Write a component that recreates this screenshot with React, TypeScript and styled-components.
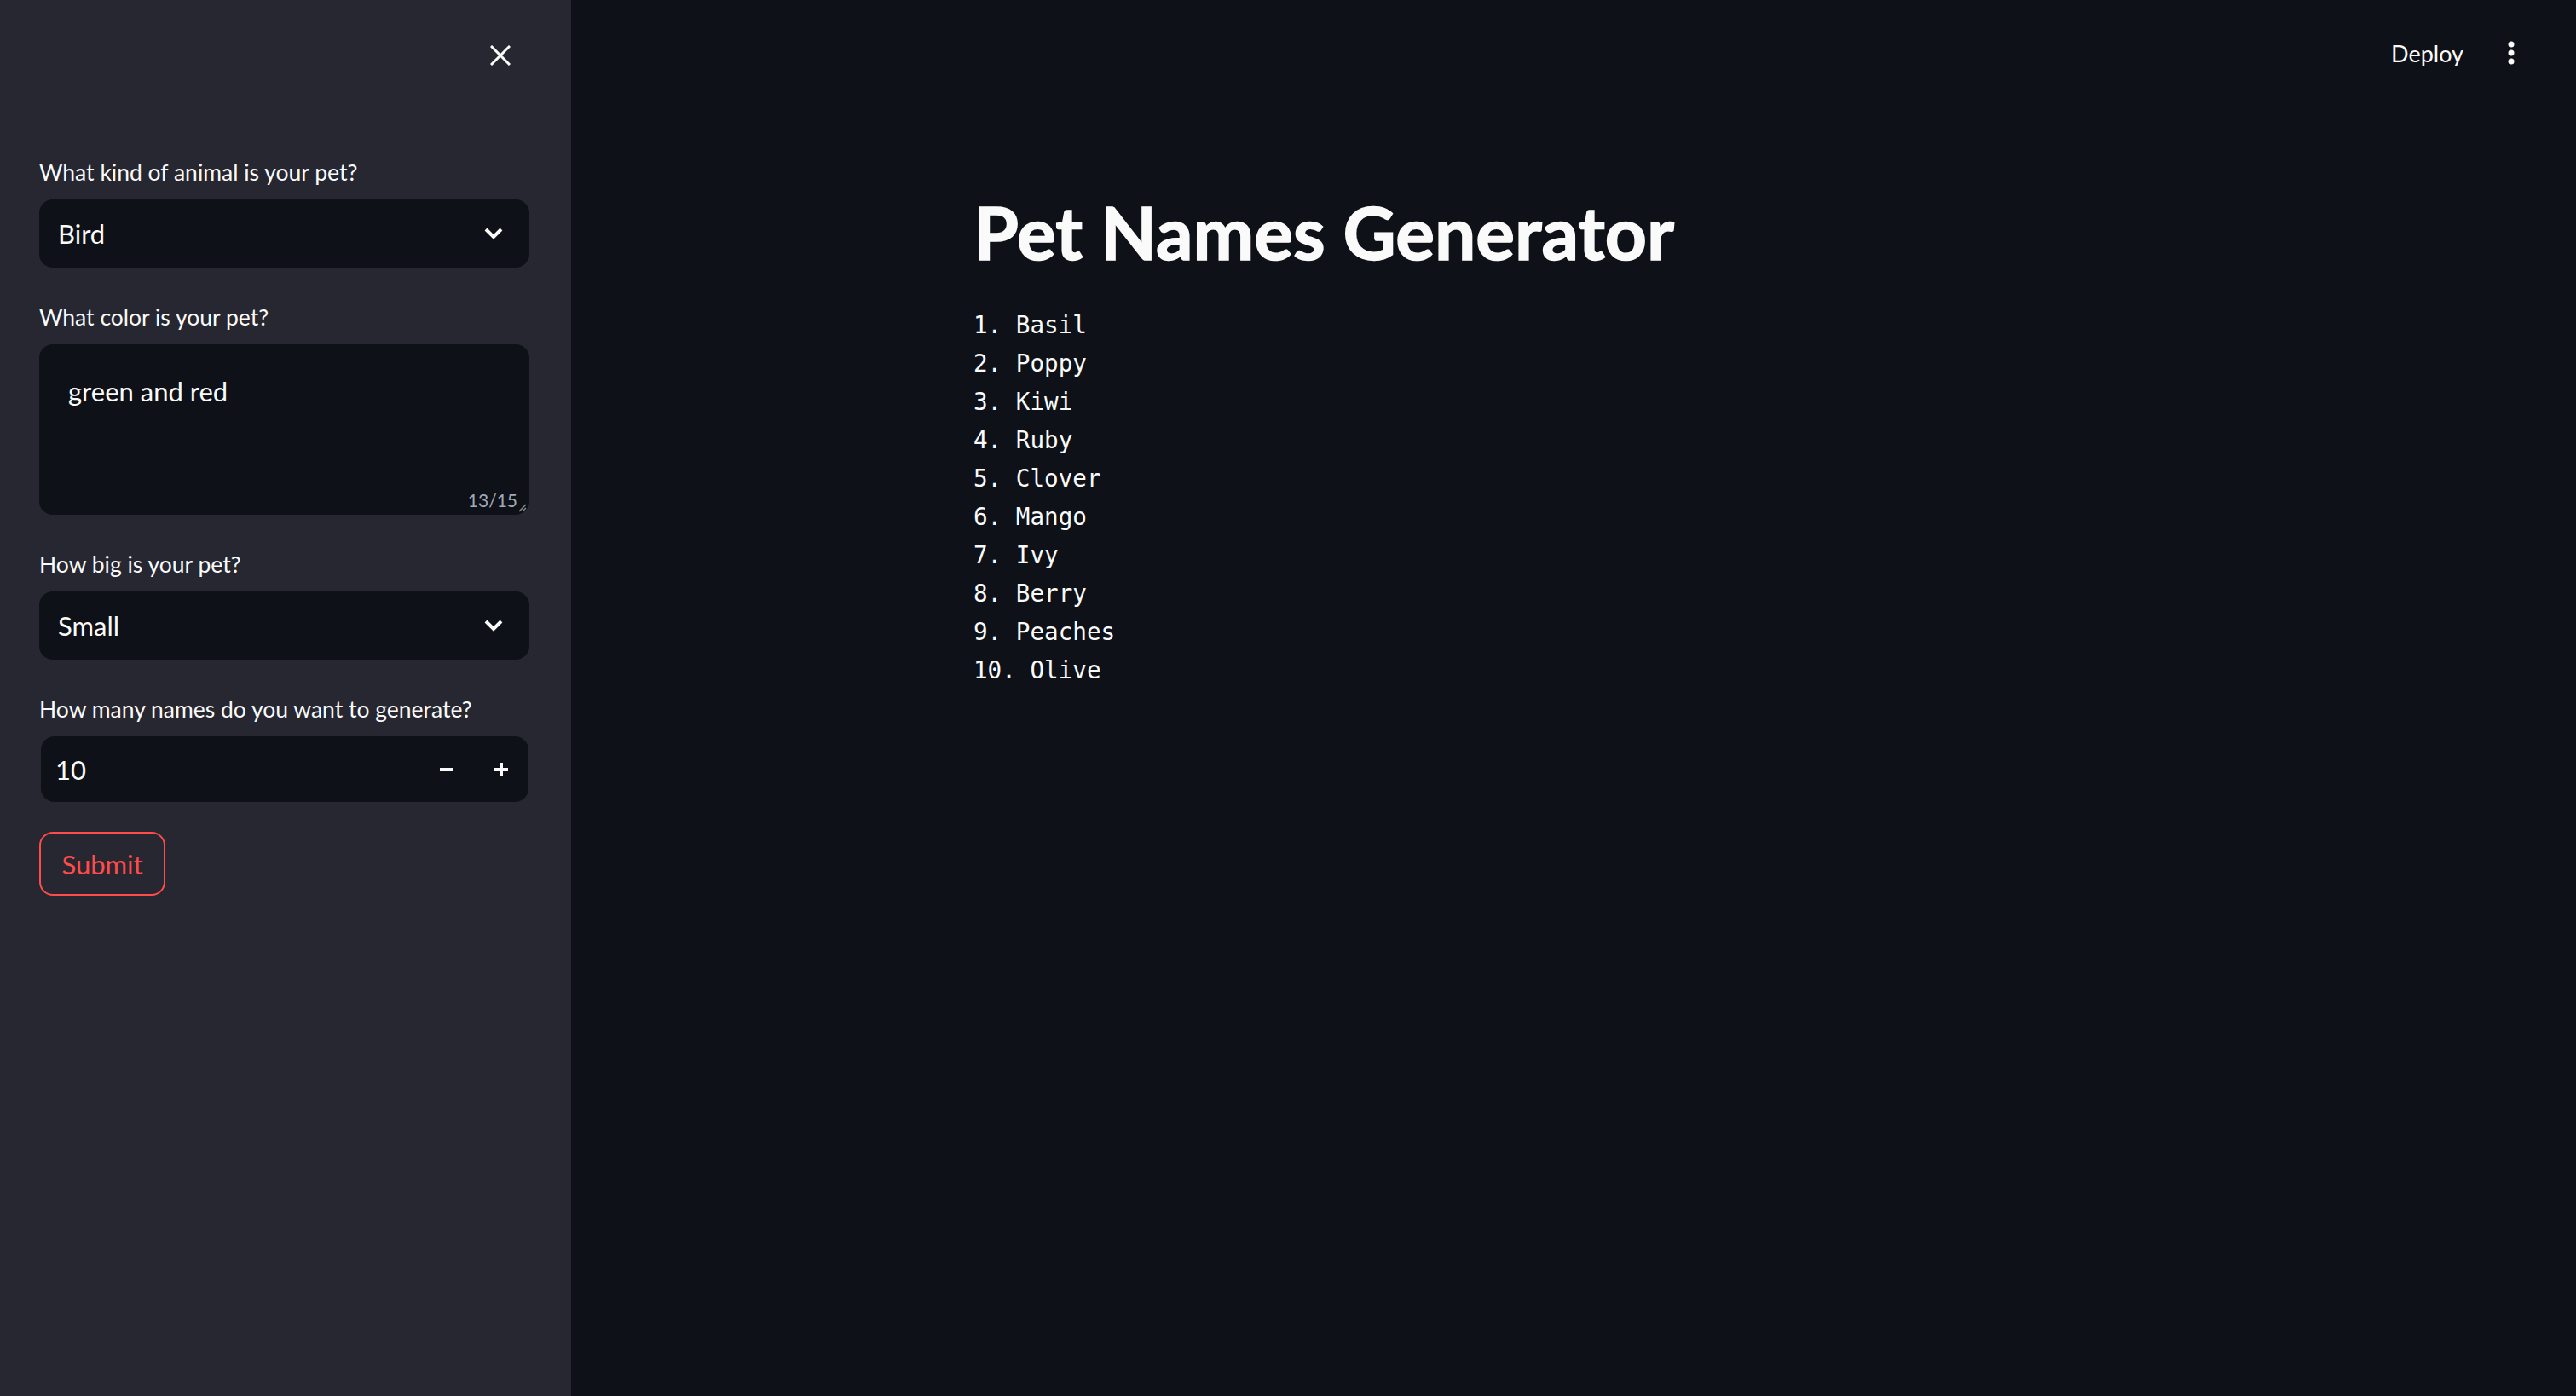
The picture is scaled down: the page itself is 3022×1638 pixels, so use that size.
import * as React from 'react';
import styled, { createGlobalStyle } from 'styled-components';

const GlobalStyle = createGlobalStyle`
  html, body {
    margin: 0;
    padding: 0;
    background: #0e1117;
  }
  body {
    font-family: Lato, "Noto Sans", sans-serif;
    color: #fafafa;
  }
  * {
    box-sizing: border-box;
  }
`;

const Page = styled.div`
  display: flex;
  flex-direction: row;
  min-height: 1638px;
  background: #0e1117;
`;

const Sidebar = styled.aside`
  width: 670px;
  flex-shrink: 0;
  display: flex;
  flex-direction: column;
  background: #262730;
  padding: 0 49px 0 46px;
`;

const SidebarHeader = styled.div`
  height: 130px;
  display: flex;
  justify-content: flex-end;
  align-items: center;
  padding-right: 22px;
`;

const CloseButton = styled.button`
  display: flex;
  align-items: center;
  justify-content: center;
  width: 24px;
  height: 24px;
  padding: 0;
  border: none;
  background: transparent;
  color: #fafafa;
`;

const Form = styled.div`
  display: flex;
  flex-direction: column;
  padding-top: 52px;
`;

const Field = styled.div<{ $gap?: number }>`
  display: flex;
  flex-direction: column;
  margin-bottom: ${props => props.$gap ?? 38}px;
`;

const Label = styled.label`
  height: 40px;
  line-height: 40px;
  margin-bottom: 12px;
  font-size: 26.5px;
  color: #fafafa;
  white-space: nowrap;
`;

const SelectBox = styled.div`
  height: 80px;
  display: flex;
  align-items: center;
  justify-content: space-between;
  padding: 0 31px 0 22px;
  border-radius: 16px;
  background: #0e1117;
  font-size: 31px;
  color: #fafafa;
`;

const TextBox = styled.div`
  position: relative;
  height: 200px;
  display: flex;
  flex-direction: column;
  justify-content: space-between;
  padding: 40px 14px 5px 34px;
  border-radius: 16px;
  background: #0e1117;
`;

const TextValue = styled.div`
  font-size: 31px;
  line-height: 30px;
  color: #fafafa;
`;

const Counter = styled.span`
  align-self: flex-end;
  font-size: 21px;
  line-height: 24px;
  color: #a3a8b8;
`;

const ResizeHandle = styled.svg`
  position: absolute;
  right: 3px;
  bottom: 3px;
`;

const NumberBox = styled.div`
  height: 77px;
  margin-left: 2px;
  margin-right: 1px;
  display: flex;
  align-items: center;
  padding-left: 17px;
  border-radius: 16px;
  background: #0e1117;
  font-size: 31px;
`;

const NumberValue = styled.span`
  flex: 1;
`;

const StepButton = styled.button`
  width: 64px;
  height: 100%;
  display: flex;
  align-items: center;
  justify-content: center;
  padding: 0;
  border: none;
  background: transparent;
  color: #fafafa;
`;

const SubmitButton = styled.button`
  align-self: flex-start;
  width: 148px;
  height: 75px;
  border: 2px solid #ff4b4b;
  border-radius: 16px;
  background: transparent;
  color: #ff4b4b;
  font-family: Lato, "Noto Sans", sans-serif;
  font-size: 31px;
  padding: 0;
`;

const Main = styled.main`
  flex: 1;
  display: flex;
  flex-direction: column;
`;

const TopBar = styled.header`
  height: 124px;
  display: flex;
  align-items: center;
  justify-content: flex-end;
  gap: 36px;
  padding-right: 56px;
`;

const DeployButton = styled.button`
  border: none;
  background: transparent;
  padding: 0;
  font-family: Lato, "Noto Sans", sans-serif;
  font-size: 27px;
  color: #fafafa;
`;

const MenuButton = styled.button`
  width: 40px;
  height: 40px;
  display: flex;
  align-items: center;
  justify-content: center;
  border: none;
  background: transparent;
  padding: 0;
  color: #fafafa;
`;

const Content = styled.section`
  width: 1408px;
  margin: 0 auto;
  padding-top: 97px;
`;

const Title = styled.h1`
  margin: 0 0 35px 0;
  font-size: 85.7px;
  line-height: 1.2;
  font-weight: 700;
  color: #fafafa;
  -webkit-text-stroke: 1.5px #fafafa;
`;

const NameList = styled.pre`
  margin: 0;
  font-family: "DejaVu Sans Mono", "Liberation Mono", monospace;
  font-size: 27.6px;
  line-height: 45px;
  color: #fafafa;
`;

const Chevron = () => (
  <svg width="22" height="14" viewBox="0 0 22 14">
    <polyline points="2,2 11,11 20,2" fill="none" stroke="#fafafa" strokeWidth="4" />
  </svg>
);

const SelectField = ({ label, value }: { label: string; value: string }) => (
  <Field>
    <Label>{label}</Label>
    <SelectBox>
      <span>{value}</span>
      <Chevron />
    </SelectBox>
  </Field>
);

const names = ['Basil', 'Poppy', 'Kiwi', 'Ruby', 'Clover', 'Mango', 'Ivy', 'Berry', 'Peaches', 'Olive'];

export default function App() {
  return (
    <>
      <GlobalStyle />
      <Page>
        <Sidebar>
          <SidebarHeader>
            <CloseButton>
              <svg width="24" height="24" viewBox="0 0 24 24">
                <path d="M1 1 L23 23 M23 1 L1 23" stroke="#fafafa" strokeWidth="3" />
              </svg>
            </CloseButton>
          </SidebarHeader>
          <Form>
            <SelectField label="What kind of animal is your pet?" value="Bird" />
            <Field>
              <Label>What color is your pet?</Label>
              <TextBox>
                <TextValue>green and red</TextValue>
                <Counter>13/15</Counter>
                <ResizeHandle width="12" height="12" viewBox="0 0 12 12">
                  <path d="M11 3 L3 11 M11 7 L7 11" stroke="#8a8d96" strokeWidth="1.5" />
                </ResizeHandle>
              </TextBox>
            </Field>
            <SelectField label="How big is your pet?" value="Small" />
            <Field $gap={35}>
              <Label>How many names do you want to generate?</Label>
              <NumberBox>
                <NumberValue>10</NumberValue>
                <StepButton>
                  <svg width="16" height="16" viewBox="0 0 16 16">
                    <rect x="0" y="6" width="16" height="4" fill="#fafafa" />
                  </svg>
                </StepButton>
                <StepButton>
                  <svg width="16" height="16" viewBox="0 0 16 16">
                    <rect x="0" y="6" width="16" height="4" fill="#fafafa" />
                    <rect x="6" y="0" width="4" height="16" fill="#fafafa" />
                  </svg>
                </StepButton>
              </NumberBox>
            </Field>
            <SubmitButton>Submit</SubmitButton>
          </Form>
        </Sidebar>
        <Main>
          <TopBar>
            <DeployButton>Deploy</DeployButton>
            <MenuButton>
              <svg width="8" height="28" viewBox="0 0 8 28">
                <circle cx="4" cy="4" r="3.5" fill="#fafafa" />
                <circle cx="4" cy="14" r="3.5" fill="#fafafa" />
                <circle cx="4" cy="24" r="3.5" fill="#fafafa" />
              </svg>
            </MenuButton>
          </TopBar>
          <Content>
            <Title>Pet Names Generator</Title>
            <NameList>{names.map((name, i) => `${i + 1}. ${name}`).join('\n')}</NameList>
          </Content>
        </Main>
      </Page>
    </>
  );
}
